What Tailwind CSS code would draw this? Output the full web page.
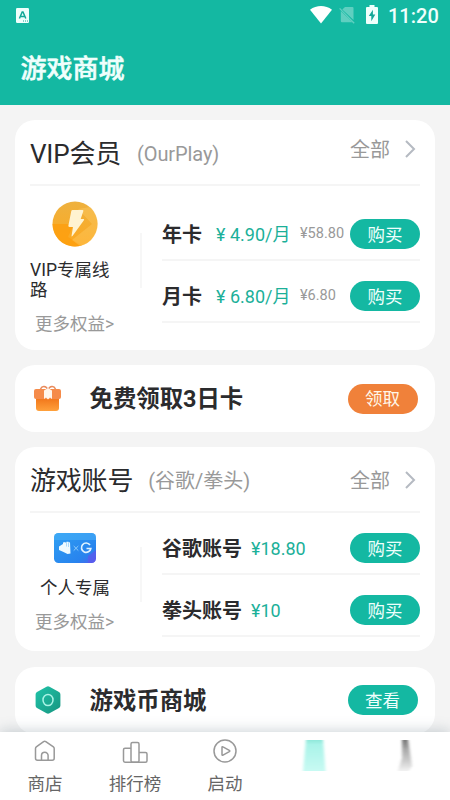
<!DOCTYPE html>
<html lang="zh-CN">
<head>
<meta charset="utf-8">
<title>游戏商城</title>
<script src="https://cdn.jsdelivr.net/npm/@tailwindcss/browser@4"></script>
</head>
<body class="w-[450px] h-[800px] overflow-hidden bg-[#f4f4f4] font-[Roboto,'Noto_Sans_CJK_SC',sans-serif] text-[#2b2b2d] whitespace-nowrap">
<div class="relative w-[450px] h-[800px] overflow-hidden flex flex-col">
  <header class="h-[105px] shrink-0 bg-[#14b8a2] text-[#effffc]">
    <div class="h-[30px] flex items-center pl-4 pr-[11px]">
      <svg class="w-[13px] h-[15px]" viewBox="0 0 13 15"><rect width="13" height="15" rx="1.2" fill="#effffc"/><path d="M3.4 10.5 6.2 4h.8l2.8 6.5M4.5 8.4h4.2" fill="none" stroke="#14a898" stroke-width="1.5"/><path d="M7 13h1M9 13h1M11 13h1" stroke="#14a898"/></svg>
      <svg class="w-[22px] h-[18px] ml-auto" viewBox="0 0 22 18"><path d="M0 3.7C6.500-1.200 15.500-1.200 22 3.700L11 17.500Z" fill="#fff"/></svg>
      <svg class="w-4 h-[18px] ml-[7px]" viewBox="0 0 16 18"><path d="M6 1h7.500q1 0 1 1v12L3.300 3.500ZM1.800 5 13.500 16.200H3q-1.200 0-1.200-1.200Z" fill="#5fcfc0"/><path d="m.6 2.400 14.600 14.800" stroke="#5fcfc0" stroke-width="1.300"/></svg>
      <svg class="w-3 h-[19px] mb-[2px] ml-[11px]" viewBox="0 0 12 19"><path d="M3.500 0h5v2H11q1 0 1 1v15q0 1-1 1H1q-1 0-1-1V3q0-1 1-1h2.500Z" fill="#effffc"/><path d="M6.900 4.800 2.800 11h2.500v5.200L9.300 9.500H6.900Z" fill="#14a898"/></svg>
      <span class="ml-[10px] w-[51px] mt-[2px] text-[20px] leading-[30px] font-medium">11:20</span>
    </div>
    <h1 class="pl-[20.500px] mt-[21px] text-[26px] leading-[36px] font-medium [-webkit-text-stroke:0.5px_#effffc]">游戏商城</h1>
  </header>

  <main class="flex flex-col gap-[15px] px-[15px] pt-[15px]">
    <section class="h-[230px] shrink-0 rounded-[20px] bg-white px-[15px]">
      <div class="h-[66px] flex items-center border-b-2 border-[#f5f5f5]">
        <h2 class="mt-[4px] text-[26px] leading-[36px] tracking-[-0.2px]">VIP会员</h2>
        <span class="mt-[3px] ml-[16px] text-[20px] tracking-[-0.1px] text-[#999]">(OurPlay)</span>
        <span class="ml-auto mb-[4px] text-[20px] leading-[30px] text-[#999]">全部</span>
        <svg class="w-3 h-[18px] ml-[14px] mr-[4px] mb-[7px]" viewBox="0 0 12 18"><path d="m2 1 8 8-8 8" fill="none" stroke="#b5bac2" stroke-width="2"/></svg>
      </div>
      <div class="flex">
        <div class="w-[110px] pt-[15px]">
          <svg class="w-[46px] h-[46px] ml-[22px]" viewBox="0 0 46 46"><defs><linearGradient id="gold" x2="0" y2="1"><stop stop-color="#eeb13f"/><stop offset="1" stop-color="#fda91f"/></linearGradient></defs><circle cx="23" cy="23" r="22.500" fill="url(#gold)"/><path d="M.5 23A22.500 22.500 0 0 0 30 44.400L16 36 22 23Z" fill="#fd9d0c" opacity=".75"/><path d="m26 8 14 15-20 16 8 6A22.500 22.500 0 0 0 38 6Z" fill="#ffd071" opacity=".35"/><path d="M20.500 9h10q1.200 0 .8 1.200L28.700 18h2.600q1.400 0 .6 1.200L20.500 35q-1.200 1.200-.9-.6L21 26h-3.500q-1.500 0-1.100-1.400L19.300 10q.3-1 1.200-1Z" fill="#fff3d0"/></svg>
          <p class="mt-[13px] text-[17.500px] leading-[20px]">VIP专属线<br>路</p>
          <p class="mt-[12px] ml-[5px] text-[17.500px] leading-[24px] text-[#999]">更多权益&gt;</p>
        </div>
        <div class="w-[2px] h-[55px] mt-[47px] bg-[#f7f7f7]"></div>
        <div class="ml-[20px] flex-1 pt-[20px]">
          <div class="h-[55px] pt-[3px] flex items-center border-b-2 border-[#f5f5f5]">
            <b class="w-[54px] mt-[2px] text-[20px] leading-[30px]">年卡</b>
            <span class="w-[84px] mt-px text-[18px] leading-[30px] text-[#1bb099]">¥ 4.90/月</span>
            <span class="text-[14.500px] leading-[30px] text-[#999]">¥58.80</span>
            <button class="ml-auto w-[70px] h-[30px] pt-[2px] rounded-full bg-[#14b8a2] text-[17.500px] leading-[28px] text-[#effffc]">购买</button>
          </div>
          <div class="h-[62px] pt-[10px] flex items-center border-b-2 border-[#f5f5f5]">
            <b class="w-[54px] mt-[2px] text-[20px] leading-[30px]">月卡</b>
            <span class="w-[84px] mt-px text-[18px] leading-[30px] text-[#1bb099]">¥ 6.80/月</span>
            <span class="text-[14.500px] leading-[30px] text-[#999]">¥6.80</span>
            <button class="ml-auto w-[70px] h-[30px] pt-[2px] rounded-full bg-[#14b8a2] text-[17.500px] leading-[28px] text-[#effffc]">购买</button>
          </div>
        </div>
      </div>
    </section>

    <section class="h-[67px] shrink-0 rounded-[20px] bg-white pl-[19px] pr-[17.500px] flex items-center">
      <svg class="w-[28px] h-[28px]" viewBox="0 0 28 28"><defs><linearGradient id="box" x2="0" y2="1"><stop stop-color="#ee6b12"/><stop offset="1" stop-color="#ffa13c"/></linearGradient></defs><path d="M14 5C12 .5 8 .5 6.500 4M14 5c2-4.500 6-4.500 7.500-1" fill="none" stroke="#e98a5b" stroke-width="1.500"/><rect x="2" y="10" width="23" height="16" rx="3" fill="url(#box)"/><rect x="0" y="4" width="27" height="10" rx="2" fill="#f58b4a"/><path d="M10 5.500 14 3l4 2.500V14l-2-1.500-2 2-2-2-2 1.500Z" fill="#fff6ec"/></svg>
      <h3 class="ml-[27.500px] mt-px text-[23.400px] leading-[34px] font-bold">免费领取3日卡</h3>
      <button class="ml-auto w-[70px] h-[30px] pt-px rounded-full bg-[#f0813a] text-[17.500px] leading-[29px] text-[#fff7e8]">领取</button>
    </section>

    <section class="h-[204px] shrink-0 rounded-[20px] bg-white px-[15px]">
      <div class="h-[66px] flex items-center border-b-2 border-[#f5f5f5]">
        <h2 class="mt-[4px] text-[26px] leading-[36px] tracking-[-0.2px]">游戏账号</h2>
        <span class="ml-[15px] mt-[3px] text-[20px] leading-[30px] text-[#999]">(谷歌/拳头)</span>
        <span class="ml-auto mt-[3px] text-[20px] leading-[30px] text-[#999]">全部</span>
        <svg class="w-3 h-[18px] ml-[14px] mr-[4px] mt-px" viewBox="0 0 12 18"><path d="m2 1 8 8-8 8" fill="none" stroke="#b5bac2" stroke-width="2"/></svg>
      </div>
      <div class="flex">
        <div class="w-[110px] pt-[20px]">
          <svg class="w-[42px] h-[30px] ml-[24px]" viewBox="0 0 42 30"><defs><linearGradient id="blue" x2="1" y2="1"><stop stop-color="#2f9ff2"/><stop offset=".75" stop-color="#2883ee"/><stop offset="1" stop-color="#525eed"/></linearGradient></defs><rect width="42" height="30" rx="4.500" fill="url(#blue)"/><path d="M0 5q0-5 5-5h32q5 0 5 5v2H0Z" fill="#48b0f8" opacity=".55"/><path d="M34 30v-7l8-6v8q0 5-5 5Z" fill="#6652ec" opacity=".55"/><path d="M5 13.500 9 11V9.500l2.200-.4.800.8.500-1.200 2 .1.300 1L16 9l.5 11.500-3 .5-4-2-4.500-2Z" fill="#f0faff"/><path d="M12.500 9.500v4M14.500 10v4" stroke="#7dc3f5" stroke-width=".6"/><path d="m19.700 13 4.600 4.600m0-4.600-4.600 4.600" stroke="#8fccfa" stroke-width="1"/><path d="M36 12a4.700 4.700 0 1 0 .8 3.500H32.500" fill="none" stroke="#dff2ff" stroke-width="1.700"/></svg>
          <p class="mt-[13px] ml-[10px] text-[17.500px] leading-[24px]">个人专属</p>
          <p class="mt-[10px] ml-[5px] text-[17.500px] leading-[24px] text-[#999]">更多权益&gt;</p>
        </div>
        <div class="w-[2px] h-[55px] mt-[34px] bg-[#f7f7f7]"></div>
        <div class="ml-[20px] flex-1 pt-[7px]">
          <div class="h-[55px] pt-[3px] flex items-center border-b-2 border-[#f5f5f5]">
            <b class="w-[89px] mt-[2px] text-[20px] leading-[30px]">谷歌账号</b>
            <span class="mt-px text-[18px] leading-[30px] text-[#1bb099]">¥18.80</span>
            <button class="ml-auto w-[70px] h-[30px] pt-[2px] rounded-full bg-[#14b8a2] text-[17.500px] leading-[28px] text-[#effffc]">购买</button>
          </div>
          <div class="h-[62px] pt-[10px] flex items-center border-b-2 border-[#f5f5f5]">
            <b class="w-[89px] mt-[2px] text-[20px] leading-[30px]">拳头账号</b>
            <span class="mt-px text-[18px] leading-[30px] text-[#1bb099]">¥10</span>
            <button class="ml-auto w-[70px] h-[30px] pt-[2px] rounded-full bg-[#14b8a2] text-[17.500px] leading-[28px] text-[#effffc]">购买</button>
          </div>
        </div>
      </div>
    </section>

    <section class="h-[67px] shrink-0 rounded-[20px] bg-white pl-[19px] pr-[17.500px] mt-px flex items-center">
      <svg class="w-[28px] h-[28px] mb-[2px]" viewBox="0 0 28 28"><defs><linearGradient id="hex" x2="1" y2="1"><stop stop-color="#20c4a9"/><stop offset="1" stop-color="#179580"/></linearGradient></defs><path d="M12.500.7q1.500-.9 3 0l9.500 5.400q1.400.8 1.400 2.400v11q0 1.600-1.400 2.400l-9.500 5.400q-1.500.9-3 0L3 21.900q-1.400-.8-1.400-2.400v-11Q1.600 6.900 3 6.100Z" fill="url(#hex)"/><ellipse cx="14" cy="14" rx="5" ry="5.500" fill="none" stroke="#a8f3e5" stroke-width="1.500"/></svg>
      <h3 class="ml-[27.500px] mt-px text-[23.400px] leading-[34px] font-bold">游戏币商城</h3>
      <button class="ml-auto mb-[2px] w-[70px] h-[30px] pt-[2px] rounded-full bg-[#14b8a2] text-[17.500px] leading-[28px] text-[#effffc]">查看</button>
    </section>
  </main>

  <nav class="absolute left-0 bottom-0 w-[450px] h-[68px] bg-white grid grid-cols-5 text-[17.500px] leading-[24px] text-[#666] shadow-[0_-2px_12px_rgba(90,110,125,0.28)]">
    <div class="flex flex-col items-center pt-[7px]">
      <svg class="w-6 h-6" viewBox="0 0 24 24" fill="none" stroke="#999" stroke-width="1.500"><path d="M2.500 9.500q0-1 .8-1.600l7.300-5.300q1.100-.8 2.200 0l7.600 5.300q.8.600.8 1.600v9.700q0 2-2 2H4.500q-2 0-2-2Z"/><path d="M8.500 21v-4.500a3.300 3.300 0 0 1 6.600 0V21"/></svg>
      <span class="mt-[9px]">商店</span>
    </div>
    <div class="flex flex-col items-center pt-[7px]">
      <svg class="w-[26px] h-6" viewBox="0 0 26 24" fill="none" stroke="#999" stroke-width="1.500"><rect x="9" y="3.500" width="8" height="19.700" rx="1.500"/><path d="M9 9.300H3q-1.500 0-1.500 1.500v11q0 1.400 1.500 1.400h20.500q1.500 0 1.500-1.500V15q0-1.500-1.500-1.500H17"/></svg>
      <span class="mt-[9px]">排行榜</span>
    </div>
    <div class="flex flex-col items-center pt-[7px]">
      <svg class="w-6 h-6" viewBox="0 0 24 24" fill="none" stroke="#999" stroke-width="1.500"><circle cx="12" cy="12" r="11"/><path d="M9 8.500q0-1.200 1-.6l6.300 3.500q1 .6 0 1.200L10 16.100q-1 .6-1-.6Z"/></svg>
      <span class="mt-[9px]">启动</span>
    </div>
    <div class="flex flex-col items-center pt-[8px]">
      <svg class="w-8 h-[31px]" viewBox="0 0 32 31"><defs><linearGradient id="mint" x2="0" y2="1"><stop stop-color="#8fe8da"/><stop offset=".15" stop-color="#a9f3e8"/><stop offset="1" stop-color="#c8faf3"/></linearGradient><filter id="softA" x="-.3" y="0" width="1.600" height="1"><feGaussianBlur stdDeviation="1.800 0"/></filter></defs><path d="M7 0h17l2.500 31H4Z" fill="url(#mint)" filter="url(#softA)"/></svg>
    </div>
    <div class="flex flex-col items-center pt-[8px]">
      <svg class="w-6 h-[31px]" viewBox="0 0 24 31"><defs><linearGradient id="gray" x2="0" y2="1"><stop stop-color="#777"/><stop offset=".3" stop-color="#a8a8a8"/><stop offset=".7" stop-color="#cfcfcf"/><stop offset="1" stop-color="#f2f2f2"/></linearGradient><filter id="softB" x="-.5" y="0" width="2" height="1"><feGaussianBlur stdDeviation="1.800 0"/></filter></defs><path d="M9 0h6l4 26-3 5H5L9 18Z" fill="url(#gray)" filter="url(#softB)"/></svg>
    </div>
  </nav>
</div>
</body>
</html>
